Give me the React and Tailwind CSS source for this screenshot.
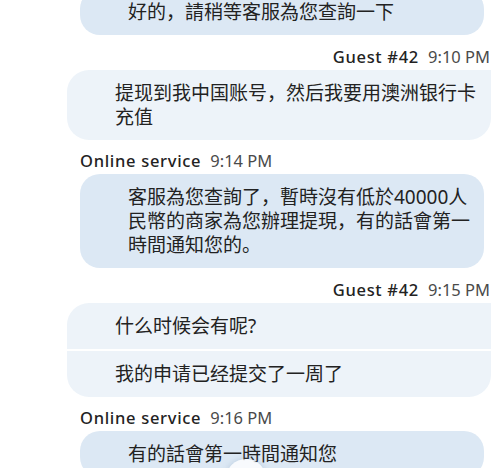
import React from 'react';

const messages = [
    { from: 'service', lines: ['好的，請稍等客服為您查詢一下'], first: true },
    { from: 'guest', time: '9:10 PM', rows: ['提现到我中国账号，然后我要用澳洲银行卡充值'] },
    { from: 'service', time: '9:14 PM', lines: ['客服為您查詢了，暫時沒有低於40000人民幣的商家為您辦理提現，有的話會第一時間通知您的。'] },
    { from: 'guest', time: '9:15 PM', rows: ['什么时候会有呢?', '我的申请已经提交了一周了'] },
    { from: 'service', time: '9:16 PM', lines: ['有的話會第一時間通知您'] },
];

const Header = ({ name, time, right }) => (
    <div
        className={`flex h-[20px] items-center gap-[9px] text-[16.5px] leading-[20px] ${right ? 'justify-end pr-[12px]' : 'pl-[80px]'}`}
    >
        <span className="font-medium tracking-[0.7px] text-[#222]">{name}</span>
        <span className="text-[#4a4a4a]">{time}</span>
    </div>
);

const App = () => {
    return (
        <div className="relative h-[468px] w-[502px] overflow-hidden bg-white font-['Noto_Sans','Noto_Sans_CJK_SC',sans-serif] text-[#222]">
            <div className="-mt-[11px] flex flex-col">
                {messages.map((m, i) => {
                    if (m.from === 'guest') {
                        return (
                            <div key={i} className="mt-[12px] flex flex-col gap-[3px]">
                                <Header name="Guest #42" time={m.time} right />
                                <div className="ml-[67px] w-[424px] overflow-hidden rounded-[22px] rounded-tr-none">
                                    {m.rows.map((r, j) => (
                                        <div
                                            key={j}
                                            className={`bg-[#edf3f9] py-[11px] pl-[48px] pr-[10px] text-[19px] leading-[24px] ${j > 0 ? 'mt-[2px]' : ''}`}
                                        >
                                            {r}
                                        </div>
                                    ))}
                                </div>
                            </div>
                        );
                    }
                    return (
                        <div key={i} className={`flex flex-col gap-[3px] ${m.first ? '' : 'mt-[11px]'}`}>
                            {!m.first && <Header name="Online service" time={m.time} />}
                            <div className="ml-[80px] w-[404px] rounded-[20px] bg-[#dce8f4] py-[11px] pl-[48px] pr-[8px] text-[19px] leading-[24px]">
                                {m.lines.map((l, j) => (
                                    <p key={j}>{l}</p>
                                ))}
                            </div>
                        </div>
                    );
                })}
            </div>
            {/* faint floating button peeking in at the bottom */}
            <div className="absolute left-[226px] top-[459px] h-[40px] w-[40px] rounded-full bg-white/80 shadow-[0_0_6px_rgba(120,150,180,0.35)]" />
        </div>
    );
};

export default App;
